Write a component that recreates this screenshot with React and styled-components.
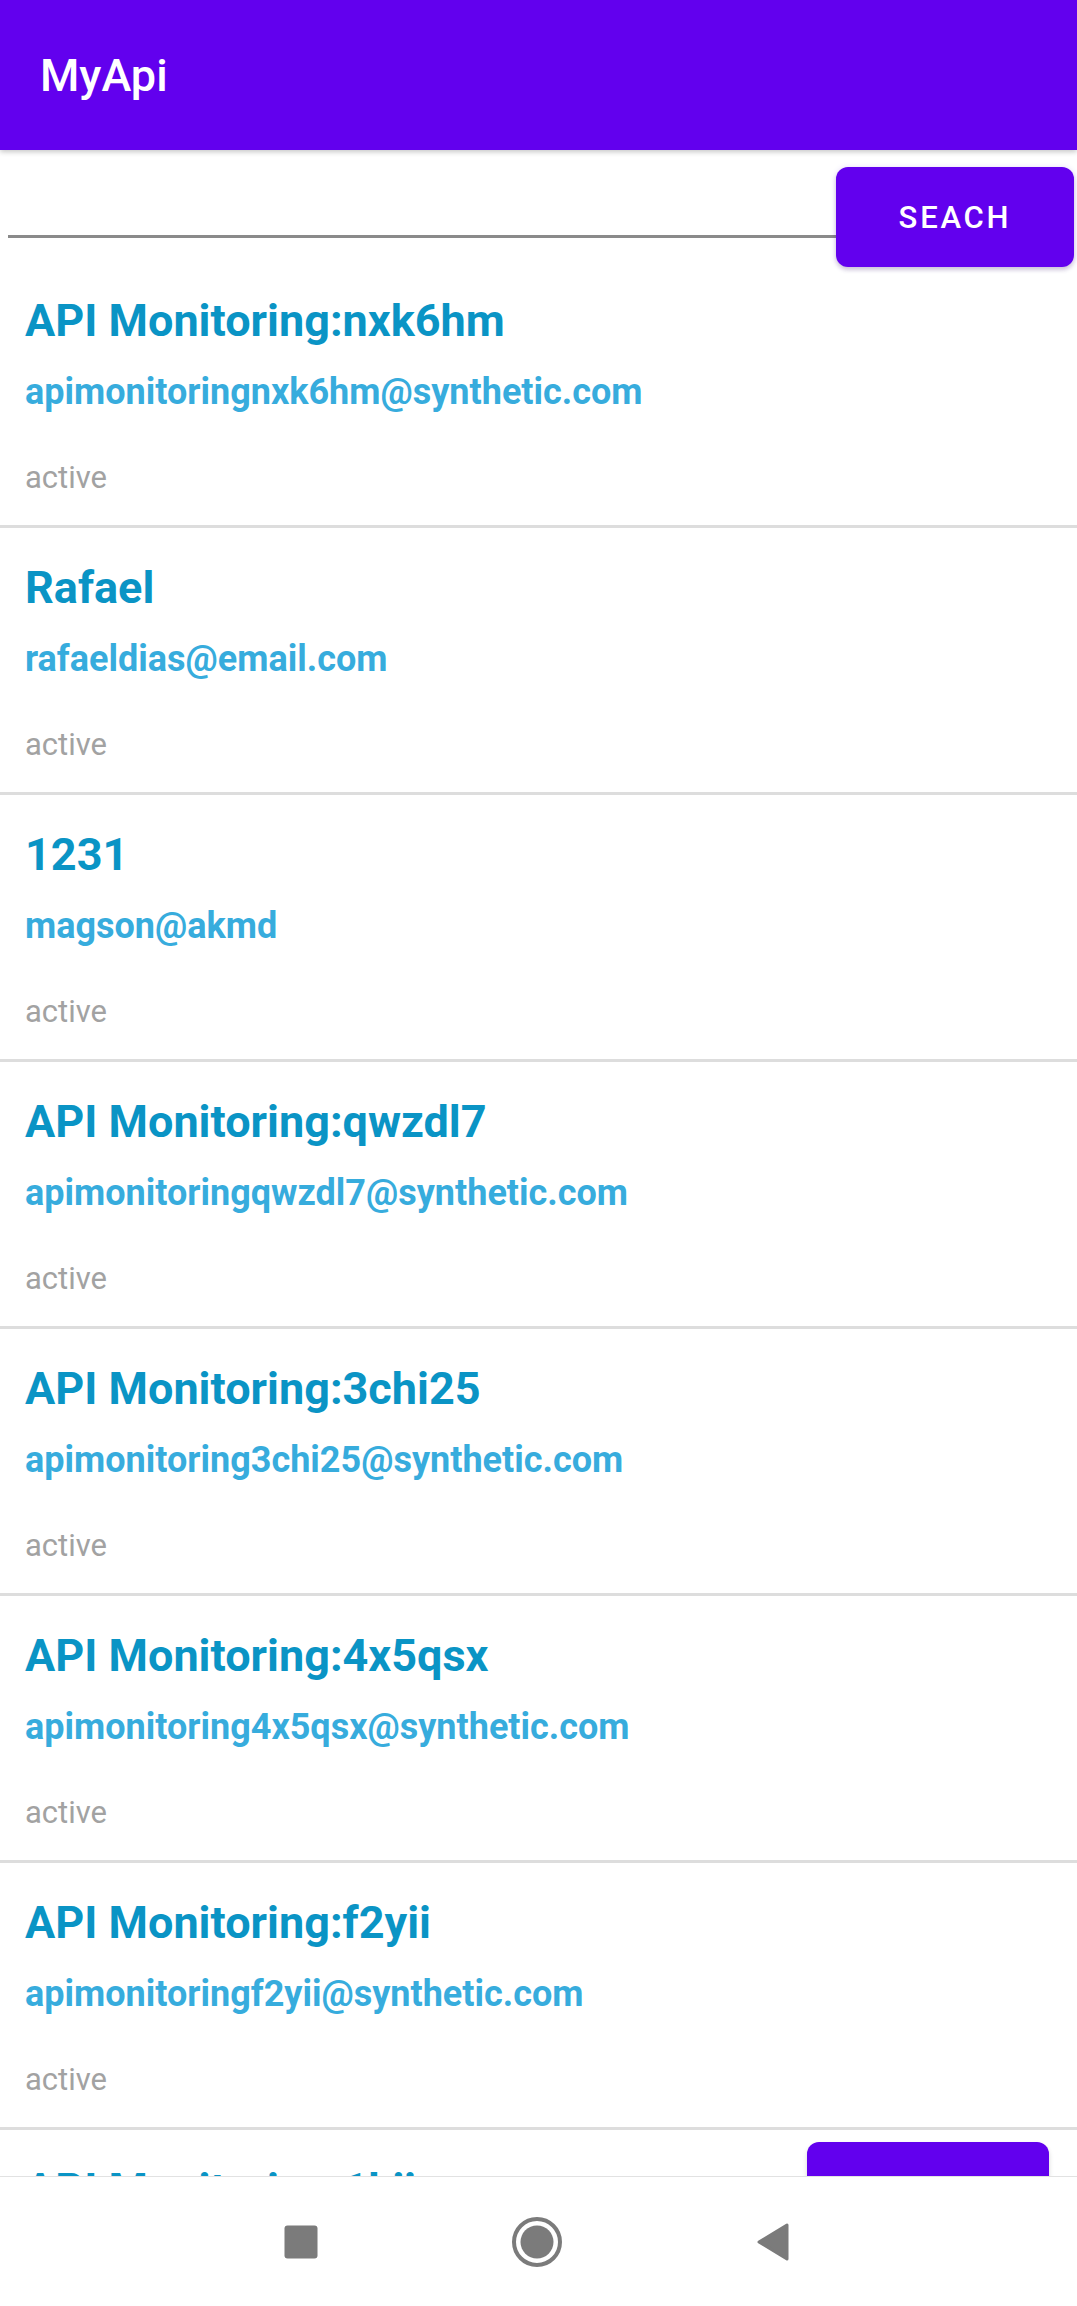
import React from "react";
import styled, { createGlobalStyle } from "styled-components";

const Global = createGlobalStyle`
  html, body { margin: 0; padding: 0; background: #ffffff; }
  body { font-family: Roboto, "Noto Sans", "Liberation Sans", sans-serif; }
  * { box-sizing: border-box; }
`;

const Screen = styled.div`
  width: 1077px;
  height: 2306px;
  display: flex;
  flex-direction: column;
  background: #ffffff;
  overflow: hidden;
`;

const AppBar = styled.header`
  flex: 0 0 150px;
  min-height: 0;
  display: flex;
  align-items: center;
  padding-left: 40px;
  background: #6200ee;
  box-shadow: 0 2px 5px rgba(0, 0, 0, 0.22);
  position: relative;
  z-index: 2;
`;

const AppTitle = styled.h1`
  margin: 0;
  color: #ffffff;
  font-family: Roboto, sans-serif;
  font-weight: 500;
  font-size: 45px;
  line-height: 53px;
`;

const SearchRow = styled.div`
  flex: 0 0 111px;
  height: 111px;
  min-height: 0;
  display: flex;
  align-items: flex-start;
  padding-left: 8px;
  padding-right: 3px;
  position: relative;
  z-index: 1;
`;

const SearchField = styled.input`
  flex: 1;
  min-width: 0;
  height: 76px;
  margin-top: 12px;
  border: none;
  border-bottom: 3px solid #8a8a8a;
  background: transparent;
  outline: none;
  font-family: Roboto, sans-serif;
  font-size: 36px;
  padding: 0 8px;
`;

const SearchButton = styled.button`
  flex: 0 0 238px;
  height: 100px;
  margin-top: 17px;
  border: none;
  border-radius: 12px;
  background: #6200ee;
  color: #ffffff;
  font-family: Roboto, sans-serif;
  font-weight: 500;
  font-size: 31px;
  letter-spacing: 2.8px;
  text-transform: uppercase;
  box-shadow: 0 3px 4px rgba(0, 0, 0, 0.14), 0 1px 6px rgba(98, 0, 238, 0.18);
  padding: 0;
`;

const ListArea = styled.div`
  flex: 1 1 auto;
  min-height: 0;
  position: relative;
  overflow: hidden;
  display: flex;
  flex-direction: column;
`;

const Item = styled.div`
  flex: 0 0 auto;
  display: flex;
  flex-direction: column;
  padding: 33px 24px 29px 25px;
  border-bottom: 3px solid #dddddd;
`;

const ItemTitle = styled.div`
  font-family: Roboto, sans-serif;
  font-weight: 700;
  font-size: 45px;
  line-height: 53px;
  color: #0a94c5;
  white-space: nowrap;
`;

const ItemEmail = styled.div`
  margin-top: 24px;
  font-family: Roboto, sans-serif;
  font-weight: 700;
  font-size: 36px;
  line-height: 42px;
  color: #37acdd;
  white-space: nowrap;
`;

const ItemStatus = styled.div`
  margin-top: 47px;
  font-family: Roboto, sans-serif;
  font-weight: 400;
  font-size: 31px;
  line-height: 36px;
  color: #a2a2a2;
`;

const FloatingButton = styled.button`
  position: absolute;
  right: 28px;
  bottom: -66px;
  width: 242px;
  height: 100px;
  border: none;
  border-radius: 12px;
  background: #6200ee;
  box-shadow: 0 3px 5px rgba(0, 0, 0, 0.16);
`;

const NavBar = styled.nav`
  flex: 0 0 130px;
  min-height: 0;
  display: flex;
  align-items: center;
  justify-content: center;
  padding-right: 4px;
  background: #ffffff;
  border-top: 1px solid #e2e2e2;
  position: relative;
  z-index: 3;
`;

const NavSlot = styled.div`
  width: 236px;
  display: flex;
  align-items: center;
  justify-content: center;
`;

const users = [
  ["API Monitoring:nxk6hm", "apimonitoringnxk6hm@synthetic.com"],
  ["Rafael", "rafaeldias@email.com"],
  ["1231", "magson@akmd"],
  ["API Monitoring:qwzdl7", "apimonitoringqwzdl7@synthetic.com"],
  ["API Monitoring:3chi25", "apimonitoring3chi25@synthetic.com"],
  ["API Monitoring:4x5qsx", "apimonitoring4x5qsx@synthetic.com"],
  ["API Monitoring:f2yii", "apimonitoringf2yii@synthetic.com"],
  ["API Monitoring:1kjiq", "apimonitoring1kjiq@synthetic.com"],
];

const NAV = "#7b7b7b";

export default function App() {
  return (
    <>
      <Global />
      <Screen>
        <AppBar>
          <AppTitle>MyApi</AppTitle>
        </AppBar>
        <SearchRow>
          <SearchField type="text" aria-label="search" />
          <SearchButton>Seach</SearchButton>
        </SearchRow>
        <ListArea>
          {users.map(([name, email]) => (
            <Item key={name}>
              <ItemTitle>{name}</ItemTitle>
              <ItemEmail>{email}</ItemEmail>
              <ItemStatus>active</ItemStatus>
            </Item>
          ))}
          <FloatingButton aria-label="add" />
        </ListArea>
        <NavBar>
          <NavSlot>
            <svg width="34" height="34" viewBox="0 0 34 34">
              <rect x="0.5" y="0.5" width="33" height="33" rx="3" fill={NAV} />
            </svg>
          </NavSlot>
          <NavSlot>
            <svg width="52" height="52" viewBox="0 0 52 52">
              <circle cx="26" cy="26" r="23" fill="none" stroke={NAV} strokeWidth="4" />
              <circle cx="26" cy="26" r="16.5" fill={NAV} />
            </svg>
          </NavSlot>
          <NavSlot>
            <svg width="34" height="40" viewBox="0 0 34 40">
              <path d="M31 3 L31 37 L3 20 Z" fill={NAV} stroke={NAV} strokeWidth="3" strokeLinejoin="round" />
            </svg>
          </NavSlot>
        </NavBar>
      </Screen>
    </>
  );
}
